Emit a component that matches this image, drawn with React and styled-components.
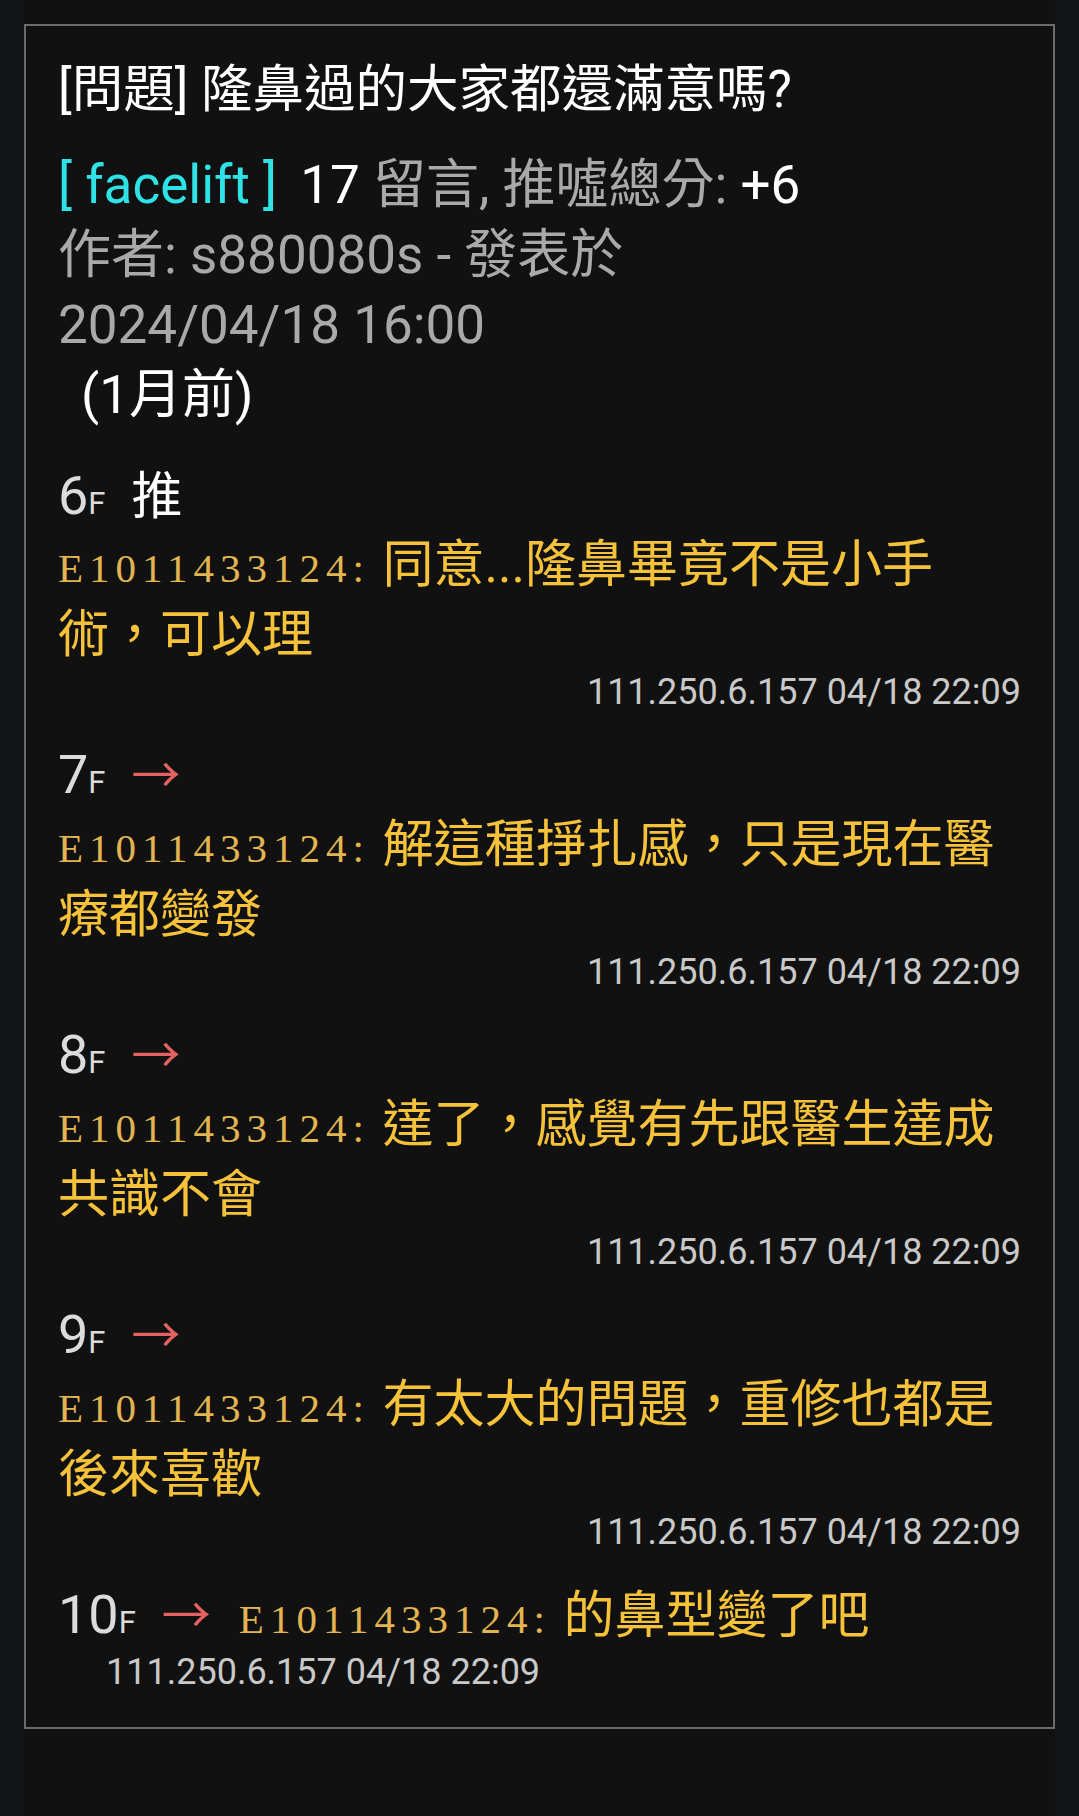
import React from "react";
import styled, { createGlobalStyle } from "styled-components";

const GlobalStyle = createGlobalStyle`
  html, body {
    margin: 0;
    padding: 0;
    background: #131418;
  }
  body {
    font-family: Roboto, "Noto Sans CJK TC", sans-serif;
  }
  * { box-sizing: border-box; }
`;

const Page = styled.div`
  margin-left: 24px;
  width: 1031px;
  min-height: 100vh;
  background: #111111;
  padding-top: 24px;
`;

const Article = styled.article`
  border: 2px solid #6b6b6b;
  padding: 29px 32px 33px;
`;

const Title = styled.h1`
  margin: 0;
  font-size: 51.5px;
  line-height: 70px;
  font-weight: 400;
  color: #ffffff;
  white-space: nowrap;
`;

const Meta = styled.div`
  margin-top: 25px;
  font-size: 53px;
  line-height: 70px;
  color: #a9a9a9;
`;

const MetaLine = styled.div`
  white-space: nowrap;
  padding-left: ${(p) => (p.$indent ? "23px" : "0")};
  color: ${(p) => (p.$bright ? "#ffffff" : "inherit")};
`;

const Board = styled.span`
  color: #2ee2e6;
  margin-right: 10px;
`;

const Bright = styled.span`
  color: #ffffff;
`;

const Comments = styled.div`
  margin-top: 30px;
  display: flex;
  flex-direction: column;
  gap: 26px;
`;

const Comment = styled.div``;

const FloorRow = styled.div`
  height: 70px;
  padding-top: 7px;
  line-height: 63px;
  white-space: nowrap;
`;

const FloorNum = styled.span`
  font-size: 54px;
  color: #dcdcdc;
  line-height: 1;
`;

const FloorSuffix = styled.span`
  font-size: 31px;
  color: #dcdcdc;
  line-height: 1;
`;

const Tag = styled.span`
  margin-left: 26px;
  font-family: "Noto Sans CJK TC", sans-serif;
  font-size: ${(p) => (p.$push ? "51px" : "49px")};
  color: ${(p) => (p.$push ? "#ffffff" : "#e46262")};
  line-height: 1;
`;

const Body = styled.div`
  font-size: 51px;
  line-height: 70px;
  color: #f5c23a;
`;

const InlineBody = styled.span`
  margin-left: 28px;
  font-size: 51px;
  color: #f5c23a;
  line-height: 1;
`;

const UserId = styled.span`
  font-family: "Liberation Serif", "Times New Roman", serif;
  font-size: 41px;
  letter-spacing: 6px;
  color: #e2b552;
  line-height: 1;
`;

const Time = styled.div`
  font-size: 36px;
  line-height: 44px;
  color: #c9c9c9;
  white-space: nowrap;
  text-align: ${(p) => (p.$inline ? "left" : "right")};
  padding-left: ${(p) => (p.$inline ? "48px" : "0")};
`;

const comments = [
  {
    floor: 6,
    push: true,
    tag: "推",
    id: "E1011433124",
    lines: ["同意...隆鼻畢竟不是小手", "術，可以理"],
    time: "111.250.6.157 04/18 22:09",
  },
  {
    floor: 7,
    tag: "→",
    id: "E1011433124",
    lines: ["解這種掙扎感，只是現在醫", "療都變發"],
    time: "111.250.6.157 04/18 22:09",
  },
  {
    floor: 8,
    tag: "→",
    id: "E1011433124",
    lines: ["達了，感覺有先跟醫生達成", "共識不會"],
    time: "111.250.6.157 04/18 22:09",
  },
  {
    floor: 9,
    tag: "→",
    id: "E1011433124",
    lines: ["有太大的問題，重修也都是", "後來喜歡"],
    time: "111.250.6.157 04/18 22:09",
  },
  {
    floor: 10,
    tag: "→",
    inline: true,
    id: "E1011433124",
    lines: ["的鼻型變了吧"],
    time: "111.250.6.157 04/18 22:09",
  },
];

function CommentItem({ c }) {
  const floor = (
    <>
      <FloorNum>{c.floor}</FloorNum>
      <FloorSuffix>F</FloorSuffix>
      <Tag $push={c.push}>{c.tag}</Tag>
    </>
  );
  if (c.inline) {
    return (
      <Comment>
        <FloorRow>
          {floor}
          <InlineBody>
            <UserId>{c.id}:</UserId> {c.lines[0]}
          </InlineBody>
        </FloorRow>
        <Time $inline>{c.time}</Time>
      </Comment>
    );
  }
  return (
    <Comment>
      <FloorRow>{floor}</FloorRow>
      <Body>
        <UserId>{c.id}:</UserId>{" "}
        {c.lines.map((l, i) => (
          <React.Fragment key={i}>
            {i > 0 && <br />}
            {l}
          </React.Fragment>
        ))}
      </Body>
      <Time>{c.time}</Time>
    </Comment>
  );
}

export default function App() {
  return (
    <>
      <GlobalStyle />
      <Page>
        <Article>
          <Title>[問題] 隆鼻過的大家都還滿意嗎?</Title>
          <Meta>
            <MetaLine>
              <Board>[ facelift ]</Board> <Bright>17</Bright> 留言, 推噓總分:{" "}
              <Bright>+6</Bright>
            </MetaLine>
            <MetaLine>作者: s880080s - 發表於</MetaLine>
            <MetaLine>2024/04/18 16:00</MetaLine>
            <MetaLine $indent $bright>
              (1月前)
            </MetaLine>
          </Meta>
          <Comments>
            {comments.map((c) => (
              <CommentItem key={c.floor} c={c} />
            ))}
          </Comments>
        </Article>
      </Page>
    </>
  );
}
